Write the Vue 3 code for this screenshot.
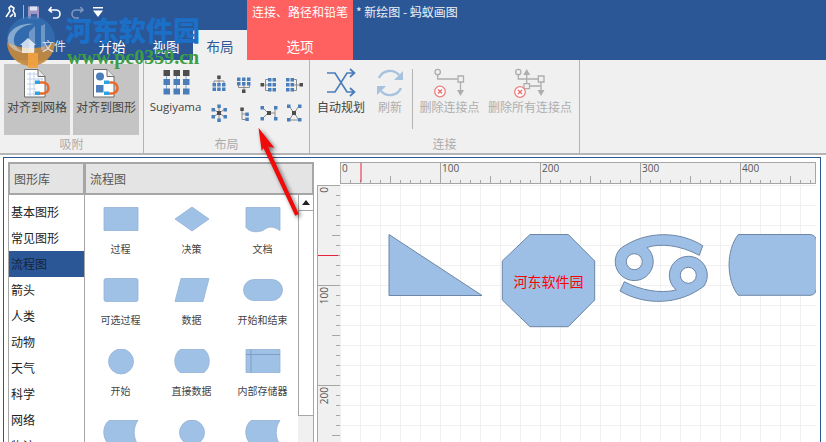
<script setup>
const sq = (x, y, s = 3.5) => `M${x} ${y}h${s}v${s}h-${s}z`
const many = (pts, s) => pts.map(([x, y]) => sq(x, y, s)).join('')
const cross = (xs, ys) => xs.flatMap((x) => ys.map((y) => [x, y]))

const layoutIcons = [
  { lines: 'M10 3v5M5 8V6h10v2', blue: many(cross([3.5, 8.2, 13], [8, 12.5])), dark: sq(8.2, 0.5) },
  { lines: 'M10 10v5M4.5 10v2.5h11V10', blue: many(cross([3, 8, 13], [2.5, 7])), dark: sq(8, 14.5) },
  { lines: 'M4 10h5M9 4.5H6.5v11H9', blue: many(cross([9, 13.5], [3, 8, 13])), dark: sq(1.5, 8) },
  { lines: 'M10 10h6M10 4.5h2.5v11H10', blue: many(cross([2, 6.5], [3, 8, 13])), dark: sq(15.5, 8) },
  { lines: 'M10 10 10 4M10 10 10 16M10 10 4 6M10 10 16 6M10 10 4 14M10 10 16 14', blue: many([[8.3, 1.5], [8.3, 15.5], [2.5, 5], [14.5, 5], [2.5, 12], [14.5, 12]]), dark: sq(8, 8, 4) },
  { lines: 'M8 8v8.5h4M8 11h4', blue: many([[11.3, 9.5], [11.3, 14.5]]), dark: sq(6.3, 4.5) },
  { lines: 'M4 5l5 5-5 5M16 4.5v11M16 10H9', blue: many([[1.5, 3], [15, 3], [1.5, 14], [15, 14]]), dark: sq(8, 8, 4) },
  { lines: 'M5 3l5 7-5 7M15 3l-5 7 5 7M5 17h10', blue: many([[3, 1.5], [14, 1.5], [3, 15], [14, 15]]), dark: sq(8, 8, 4) }
]

const categories = ['基本图形', '常见图形', '流程图', '箭头', '人类', '动物', '天气', '科学', '网络', '物流']

const shapes = [
  { label: '过程', d: 'M5 .5h34v23H5z' },
  { label: '决策', d: 'M22 0 39 12 22 24 5 12z' },
  { label: '文档', d: 'M5 .5h34v23c-8-5-12-4-17 0-6 2-13 2-17-3z' },
  { label: '可选过程', d: 'M7 .5h30q2 0 2 2v19q0 2-2 2H7q-2 0-2-2v-19q0-2 2-2z' },
  { label: '数据', d: 'M11 .5h28l-6 23H5z' },
  { label: '开始和结束', d: 'M13 1.500h18a10.500 10.500 0 0 1 0 21H13a10.500 10.500 0 0 1 0-21z' },
  { label: '开始', d: 'M22 0a12.500 12.500 0 1 1 0 25 12.500 12.500 0 0 1 0-25z' },
  { label: '直接数据', d: 'M10 .5h24c7 5 7 18 0 23H10C3 18 3 6 10 .5z' },
  { label: '内部存储器', d: 'M5 .5h34v23H5z', inner: 'M5 5.500h34M10 .5v23' },
  { label: '', d: 'M10 .5h29c-5 6-5 18 0 24H10C3 18 3 6 10 .5z' },
  { label: '', d: 'M22 0a12.500 12.500 0 1 1 0 25 12.500 12.500 0 0 1 0-25z' },
  { label: '', d: 'M10 .5h29c-5 6-5 18 0 24H10C3 18 3 6 10 .5z' }
]

const topTicks = Array.from({ length: 48 }, (_, i) => {
  const h = i % 10 === 0 ? 22 : i % 5 === 0 ? 8 : 4
  return `M${i * 10 + 0.5} 22v-${h}`
}).join('')
const leftTicks = Array.from({ length: 26 }, (_, i) => {
  const w = i % 10 === 0 ? 22 : i % 5 === 0 ? 8 : 4
  return `M22 ${i * 10 + 0.5}h-${w}`
}).join('')
const topLabels = [0, 100, 200, 300, 400]
const leftLabels = [0, 100, 200]
</script>

<template>
  <div class="app">
    <header class="titlebar">
      <div class="title-left">
        <div class="qat">
          <svg class="qat-app" width="14" height="14" viewBox="0 0 14 14"><path d="M2 12 6 6l-1-3 2-2 3 2-1 3 2 3v3M9 9 6 12" fill="none" stroke="#fff" stroke-width="1.6"/></svg>
          <span class="qat-sep"></span>
          <svg width="13" height="13" viewBox="0 0 13 13"><path d="M1 .5h11v12H1z" fill="#9d97c6"/><path d="M3 .5h7v4H3z" fill="#dfe3f2"/><path d="M4 8h6v4.500H4z" fill="#3f5f9e"/></svg>
          <svg class="qat-gap" width="14" height="13" viewBox="0 0 14 13"><path d="M3.500 1 1 4l3 2.500M1.500 4H8a4 4 0 0 1 0 8H5" fill="none" stroke="#fff" stroke-width="1.600"/></svg>
          <svg class="qat-gap" width="14" height="13" viewBox="0 0 14 13"><path d="M10.500 1 13 4l-3 2.500M12.500 4H6a4 4 0 0 0 0 8h3" fill="none" stroke="#7f97bf" stroke-width="1.600"/></svg>
          <svg class="qat-gap" width="12" height="13" viewBox="0 0 12 13"><path d="M1 1h10v1.500H1zM1 4.500h10L6 11z" fill="#fff"/></svg>
        </div>
        <nav class="tabs">
          <span class="tab tab-file">文件</span>
          <span class="tab">开始</span>
          <span class="tab">视图</span>
          <span class="tab tab-active">布局</span>
        </nav>
      </div>
      <div class="context">
        <span>连接、路径和铅笔</span>
        <span class="context-tab">选项</span>
      </div>
      <div class="doc-title">* 新绘图 - 蚂蚁画图</div>
    </header>

    <section class="ribbon">
      <div class="group group-snap">
        <div class="group-body snap-body">
          <button class="snap-btn">
            <svg width="28" height="30" viewBox="0 0 28 30">
              <path d="M1.500 1.500H15L22 8.500V29H1.500z" fill="#fff" stroke="#6d6d6d"/>
              <path d="M15 1.500V8.500h7" fill="#e8e8e8" stroke="#6d6d6d"/>
              <path d="M4 6h10M4 11h16M4 16h9M4 21h9M4 26h16M7 4v24M11 4v24M15 10v6M15 24v4M19 10v3" stroke="#bcd4ec" fill="none"/>
              <path d="M17 14.500h3a5.500 5.500 0 0 1 0 11h-3" fill="none" stroke="#e8692a" stroke-width="2.600"/>
              <path d="M12 12.500h5v3.500h-5zM12 23.500h5v3.500h-5z" fill="#29a3e6"/>
            </svg>
            <span>对齐到网格</span>
          </button>
          <button class="snap-btn">
            <svg width="28" height="30" viewBox="0 0 28 30">
              <path d="M1.500 1.500H15L22 8.500V29H1.500z" fill="#fff" stroke="#6d6d6d"/>
              <path d="M15 1.500V8.500h7" fill="#e8e8e8" stroke="#6d6d6d"/>
              <circle cx="8" cy="8.500" r="4" fill="#4a7ebb"/>
              <path d="M4 17h7.500v7.500H4z" fill="#4a7ebb"/>
              <path d="M17 14.500h3a5.500 5.500 0 0 1 0 11h-3" fill="none" stroke="#e8692a" stroke-width="2.600"/>
              <path d="M12 12.500h5v3.500h-5zM12 23.500h5v3.500h-5z" fill="#29a3e6"/>
            </svg>
            <span>对齐到图形</span>
          </button>
        </div>
        <div class="group-label">吸附</div>
      </div>

      <div class="group group-layout">
        <div class="group-body layout-body">
          <div class="tool tool-sugi">
            <svg width="32" height="32" viewBox="160 67 32 32">
              <path d="M166.500 72v20M176.500 72v20M186 72v20" stroke="#8aa6c8" fill="none"/>
              <path d="M163.500 70h6.500v6h-6.500zM173.500 70h6.500v6h-6.500zM183 70h6.500v6H183z" fill="#4d4d4d"/>
              <path d="M163.500 79h6.500v6h-6.500zM173.500 79h6.500v6h-6.500zM183 79h6.500v6H183zM163.500 88.500h6.500v6h-6.500zM173.500 88.500h6.500v6h-6.500zM183 88.500h6.500v6H183z" fill="#4a7ebb"/>
            </svg>
            <span class="sugi-label">Sugiyama</span>
          </div>
          <div class="icon-grid">
            <svg v-for="(ic, i) in layoutIcons" :key="i" width="20" height="20" viewBox="0 0 20 20">
              <path :d="ic.lines" fill="none" stroke="#8c8c8c"/>
              <path :d="ic.blue" fill="#4a7ebb"/>
              <path :d="ic.dark" fill="#4d4d4d"/>
            </svg>
          </div>
        </div>
        <div class="group-label">布局</div>
      </div>

      <div class="group group-connect">
        <div class="group-body connect-body">
          <div class="tool tool-auto">
            <svg width="32" height="32" viewBox="325 67 32 32">
              <path d="M327 73h8l12 19h7M327 92h8l12-19h7M350 69l4.500 4-4.500 4M350 88l4.500 4-4.500 4" fill="none" stroke="#4a7ebb" stroke-width="1.700"/>
            </svg>
            <span>自动规划</span>
          </div>
          <div class="tool tool-refresh is-off">
            <svg width="32" height="32" viewBox="374 67 32 32">
              <path d="M379 78a12 12 0 0 1 20-3M401 88a12 12 0 0 1-20 3" fill="none" stroke="#a6c2df" stroke-width="2.400"/>
              <path d="M403 71v9h-9zM377 95v-9h9z" fill="#a6c2df"/>
            </svg>
            <span>刷新</span>
          </div>
          <span class="vsep"></span>
          <div class="tool tool-del is-off">
            <svg width="40" height="32" viewBox="430 67 40 32">
              <circle cx="437.700" cy="72" r="2.700" fill="none" stroke="#adadad" stroke-width="1.300"/>
              <path d="M437.700 75v4h20" fill="none" stroke="#adadad" stroke-width="1.300"/>
              <path d="M458 76h5.500v6H458z" fill="none" stroke="#adadad" stroke-width="1.300"/>
              <path d="M460.500 82v9" stroke="#adadad" stroke-width="1.300"/>
              <path d="M457 90h7l-3.500 6z" fill="#adadad"/>
              <circle cx="440" cy="91.500" r="5.300" fill="#fff" stroke="#ef7f7f" stroke-width="1.300"/>
              <path d="M438 89.500l4 4M442 89.500l-4 4" stroke="#ef6f6f" stroke-width="1.400"/>
            </svg>
            <span>删除连接点</span>
          </div>
          <div class="tool tool-delall is-off">
            <svg width="40" height="32" viewBox="510 67 40 32">
              <circle cx="518.300" cy="72" r="2.700" fill="none" stroke="#adadad" stroke-width="1.300"/>
              <path d="M518.300 75v4h20M529.500 86h11.500M526.700 84V74M541 82v9" fill="none" stroke="#adadad" stroke-width="1.300"/>
              <path d="M538.300 76h5.700v6h-5.700zM524 83.700h5.500v5H524z" fill="none" stroke="#adadad" stroke-width="1.300"/>
              <path d="M523.200 75h7l-3.500-6zM537.500 90h7l-3.500 6z" fill="#adadad"/>
              <circle cx="520" cy="92" r="5.300" fill="#fff" stroke="#ef7f7f" stroke-width="1.300"/>
              <path d="M518 90l4 4M522 90l-4 4" stroke="#ef6f6f" stroke-width="1.400"/>
            </svg>
            <span>删除所有连接点</span>
          </div>
        </div>
        <div class="group-label">连接</div>
      </div>
    </section>

    <main class="workspace">
      <div class="window">
        <section class="library">
          <div class="lib-head lib-head-a">图形库</div>
          <div class="lib-head lib-head-b">流程图</div>
          <ul class="cats">
            <li v-for="c in categories" :key="c" :class="{ 'cat-active': c === '流程图' }">{{ c }}</li>
          </ul>
          <div class="shape-pane">
            <div class="shape-grid">
              <div v-for="(s, i) in shapes" :key="i" class="shape-cell">
                <svg width="44" height="26" viewBox="0 0 44 26">
                  <path :d="s.d" fill="#a0c1e6" stroke="#93b1d6" stroke-width=".8"/>
                  <path v-if="s.inner" :d="s.inner" fill="none" stroke="#7f9cc4"/>
                </svg>
                <span>{{ s.label }}</span>
              </div>
            </div>
            <div class="scroll">
              <div class="scroll-up"><i></i></div>
              <div class="scroll-track"></div>
              <div class="scroll-rest"></div>
            </div>
          </div>
        </section>

        <section class="pane">
          <div class="corner"></div>
          <div class="ruler ruler-top">
            <svg width="476" height="22" viewBox="0 0 476 22">
              <path :d="topTicks" stroke="#a6a6a6" fill="none"/>
              <text v-for="n in topLabels" :key="n" class="ruler-text" :x="n + 2" y="10">{{ n }}</text>
              <path d="M21 0v20" stroke="#e8223a"/>
            </svg>
          </div>
          <div class="ruler ruler-left">
            <svg width="22" height="260" viewBox="0 0 22 260">
              <path d="M0 .5h22" stroke="#a6a6a6"/>
              <path :d="leftTicks" stroke="#a6a6a6" fill="none"/>
              <text v-for="n in leftLabels" :key="n" class="ruler-text" text-anchor="end" :transform="`translate(10 ${n + 2}) rotate(-90)`">{{ n }}</text>
              <path d="M0 70.500h20" stroke="#e8223a"/>
            </svg>
          </div>
          <div class="canvas">
            <svg width="476" height="257" viewBox="340 185 476 257">
              <g fill="#9dbfe5" stroke="#6d86a6" stroke-width="1">
                <path d="M389 234.500V295.500H482z"/>
                <path d="M530 234.500h38.300L594.700 261v39l-26.400 26.700H530L502.300 300v-39z"/>
                <path fill-rule="evenodd" d="M702.700 245.700C680 231 645 230 620 249A19 19 0 1 0 647 247.500C660 243 680 245 699.300 255.300zM642.300 261.700a8 8 0 1 0-16 0 8 8 0 0 0 16 0z"/>
                <path fill-rule="evenodd" d="M620 291 624.300 281.700C640 290 660 294 676.300 290A19 19 0 1 1 704 286C680 305 645 306 620 291zM696.300 275.300a8 8 0 1 0-16 0 8 8 0 0 0 16 0z"/>
                <path d="M738.300 234.500H810Q816 235 816.500 241V288Q816 295 810 295.300H738.300C726 280 726 250 738.300 234.500z"/>
              </g>
              <text class="shape-text" x="548.500" y="287" text-anchor="middle">河东软件园</text>
            </svg>
          </div>
        </section>
      </div>
    </main>

    <svg class="logo" width="56" height="60" viewBox="0 0 56 60" aria-hidden="true">
      <circle cx="28" cy="28" r="24" fill="#3a80c4" opacity=".5"/>
      <path d="M4 30a24 24 0 0 0 48 0c-8 4-14 6-24 6S12 34 4 30z" fill="#c98a3a" opacity=".9"/>
      <path d="M5 30c-2-10 10-20 26-18-12 1-21 8-20 18 1 6 8 10 14 11-10 0-18-4-20-11z" fill="#dce6f2" opacity=".5"/>
      <path d="M26 20l6-6v26h-6zM38 14l4-2v26h-4z" fill="#c8d8ec" opacity=".4"/>
      <path d="M17 33 25 26l8 7h-2v8H19v-8z" fill="#fff" opacity=".75"/>
      <path d="M25 41h10v15H25z" fill="#f2a23f" opacity=".9"/>
    </svg>
    <div class="mark-cn">河东软件园</div>
    <div class="mark-url">www.pc0359.cn</div>

    <svg class="arrow" width="50" height="95" viewBox="255 125 50 95" aria-hidden="true">
      <path d="M258.500 127.800 274.300 147.700 268 146.800 298.800 214 295.200 215.700 263.500 148 261.700 151z" fill="#f00a0a"/>
    </svg>
  </div>
</template>

<style scoped>
.app {
  position: relative;
  width: 826px;
  height: 442px;
  overflow: hidden;
  background: #fff;
  color: #333;
  font-family: "Noto Sans CJK SC", "Open Sans", sans-serif;
  font-size: 12px;
  display: flex;
  flex-direction: column;
}
.titlebar {
  flex: none;
  height: 60px;
  background: #2b5797;
  color: #fff;
  display: flex;
}
.title-left {
  width: 247px;
  display: flex;
  flex-direction: column;
}
.qat {
  height: 30px;
  padding: 0 0 6px 4px;
  box-sizing: border-box;
  display: flex;
  align-items: center;
}
.qat-app { margin-right: 5px; }
.qat-sep {
  width: 1px;
  height: 14px;
  background: #9fb4d4;
  margin-right: 3px;
}
.qat-gap { margin-left: 8px; }
.tabs {
  height: 30px;
  display: flex;
  padding-left: 30px;
}
.tab {
  width: 54px;
  font-size: 13.500px;
  line-height: 32px;
  text-align: center;
}
.tab-file {
  position: relative;
  z-index: 1;
  width: 55px;
  box-sizing: border-box;
  padding-right: 7px;
  font-size: 12px;
  color: #dfe6f2;
}
.tab-active {
  background: #f0f0f0;
  color: #2b5797;
}
.context {
  width: 106px;
  background: #ff6060;
  display: flex;
  flex-direction: column;
  align-items: center;
}
.context span {
  height: 30px;
  line-height: 24px;
  font-size: 12px;
}
.context .context-tab {
  font-size: 13.500px;
  line-height: 32px;
}
.doc-title {
  padding-left: 3px;
  font-size: 12px;
  line-height: 24px;
  color: #eef2f8;
}
.ribbon {
  flex: none;
  height: 95px;
  box-sizing: border-box;
  display: flex;
  background: #f0f0f0;
  border-bottom: 2px solid #b4b4b4;
}
.group {
  display: flex;
  flex-direction: column;
  box-sizing: border-box;
  border-right: 1px solid #b4b4b4;
}
.group-snap { width: 144px; }
.group-layout { width: 166px; }
.group-connect { width: 270px; }
.group-body {
  flex: none;
  height: 75px;
  display: flex;
}
.group-label {
  flex: 1;
  text-align: center;
  color: #ababab;
  font-size: 12px;
  line-height: 18px;
}
.snap-body {
  padding: 4px 0 0 4px;
  gap: 3px;
  box-sizing: border-box;
}
.snap-btn {
  width: 66px;
  height: 71px;
  border: 0;
  padding: 4px 0 0;
  background: #c4c4c4;
  color: #444;
  font: inherit;
  display: flex;
  flex-direction: column;
  align-items: center;
  gap: 1px;
}
.snap-btn span { line-height: 16px; font-size: 12px; white-space: nowrap; color: #444; }
.tool {
  padding-top: 7px;
  box-sizing: border-box;
  display: flex;
  flex-direction: column;
  align-items: center;
  white-space: nowrap;
  line-height: 16px;
  color: #444;
}
.tool.is-off { color: #aeaeae; }
.tool-sugi { width: 60px; margin-left: 3px; }
.sugi-label { font-family: "Open Sans", sans-serif; font-size: 11.500px; }
.icon-grid {
  margin: 15px 0 0 5px;
  display: grid;
  grid-template-columns: repeat(4, 25px);
  grid-template-rows: 28px 20px;
  justify-items: start;
}
.connect-body { padding-left: 4px; }
.tool-auto { width: 54px; }
.tool-refresh { width: 36px; margin-left: 4px; }
.vsep {
  width: 1px;
  height: 60px;
  margin: 9px 3px 0 4px;
  background: #b4b4b4;
}
.tool-del { width: 67px; }
.tool-delall { width: 92px; margin-left: 1px; }
.workspace {
  flex: 1;
  min-height: 0;
  padding: 2px 5px 0 3px;
  background: #fff;
}
.window {
  height: 100%;
  box-sizing: border-box;
  border: 1px solid #2b5797;
  border-bottom: 0;
  padding: 4px 3px 0 4px;
  display: flex;
  gap: 3px;
  overflow: hidden;
}
.library {
  flex: none;
  width: 306px;
  display: grid;
  grid-template-columns: 77px 229px;
  grid-template-rows: 33px 1fr;
}
.lib-head {
  box-sizing: border-box;
  background: #e4e4e4;
  border: 2px solid #a6a6a6;
  padding-left: 4px;
  font-size: 12px;
  line-height: 29px;
  color: #555;
}
.lib-head-b { border-left: 1px solid #a6a6a6; }
.cats {
  list-style: none;
  margin: 0;
  padding: 4px 0 0;
  border-left: 1px solid #a6a6a6;
  border-right: 1px solid #a6a6a6;
  overflow: hidden;
  color: #222;
}
.cats li {
  height: 26px;
  line-height: 25px;
  padding-left: 2px;
  font-size: 12px;
}
.cats .cat-active { background: #2b5797; color: #16243a; }
.shape-pane {
  display: flex;
  min-height: 0;
  overflow: hidden;
}
.shape-grid {
  flex: none;
  width: 213px;
  padding-top: 12px;
  display: grid;
  grid-template-columns: repeat(3, 71px);
  grid-auto-rows: 71px;
  overflow: hidden;
}
.shape-cell {
  display: flex;
  flex-direction: column;
  align-items: center;
  gap: 9px;
  font-size: 10px;
  line-height: 14px;
  color: #444;
}
.scroll {
  flex: none;
  width: 16px;
  display: flex;
  flex-direction: column;
  box-sizing: border-box;
  border-right: 1px solid #a6a6a6;
}
.scroll-up {
  flex: none;
  height: 16px;
  box-sizing: border-box;
  border-bottom: 1px solid #a6a6a6;
  border-left: 1px solid #a6a6a6;
  display: flex;
  align-items: center;
  justify-content: center;
}
.scroll-up i {
  width: 0;
  height: 0;
  border-left: 4px solid transparent;
  border-right: 4px solid transparent;
  border-bottom: 5px solid #222;
}
.scroll-track {
  flex: none;
  height: 205px;
  box-sizing: border-box;
  border-left: 1px solid #a6a6a6;
  border-bottom: 1px solid #a6a6a6;
}
.scroll-rest { flex: 1; background: #f0f0f0; }
.pane {
  flex: none;
  width: 499px;
  display: grid;
  grid-template-columns: 23px 476px;
  grid-template-rows: 23px 1fr;
}
.ruler {
  background: #f0f0f0;
  overflow: hidden;
}
.ruler svg { display: block; }
.ruler-top {
  box-sizing: border-box;
  height: 22px;
  border: 1px solid #a6a6a6;
  border-left: 0;
}
.ruler-top svg { margin-top: -1px; }
.ruler-left {
  width: 22px;
  border-left: 1px solid #a6a6a6;
  border-right: 1px solid #a6a6a6;
  margin-right: -1px;
}
.ruler-text {
  font-family: "Open Sans", sans-serif;
  font-size: 10px;
  fill: #555;
}
.canvas {
  overflow: hidden;
  background-color: #fff;
  background-image:
    linear-gradient(to right, #f0f0f0 1px, transparent 1px),
    linear-gradient(to bottom, #f0f0f0 1px, transparent 1px);
  background-size: 20px 20px;
}
.canvas svg { display: block; }
.shape-text {
  font-size: 14px;
  fill: #ff0000;
  font-family: "Noto Sans CJK SC", sans-serif;
}
.logo {
  position: absolute;
  left: 3px;
  top: 12px;
  pointer-events: none;
}
.mark-cn {
  position: absolute;
  left: 65px;
  top: 10px;
  font-size: 27px;
  line-height: 40px;
  font-weight: 900;
  color: #1b6fc6;
  white-space: nowrap;
}
.mark-url {
  position: absolute;
  left: 67px;
  top: 46px;
  font-family: "Liberation Serif", serif;
  font-size: 20px;
  line-height: 22px;
  font-weight: 700;
  color: #3f9e45;
  white-space: nowrap;
}
.arrow {
  position: absolute;
  left: 255px;
  top: 125px;
  filter: drop-shadow(2px 2px 2px rgba(0, 0, 0, .55));
}
</style>

<style>
html, body { margin: 0; background: #fff; overflow: hidden; }
</style>
